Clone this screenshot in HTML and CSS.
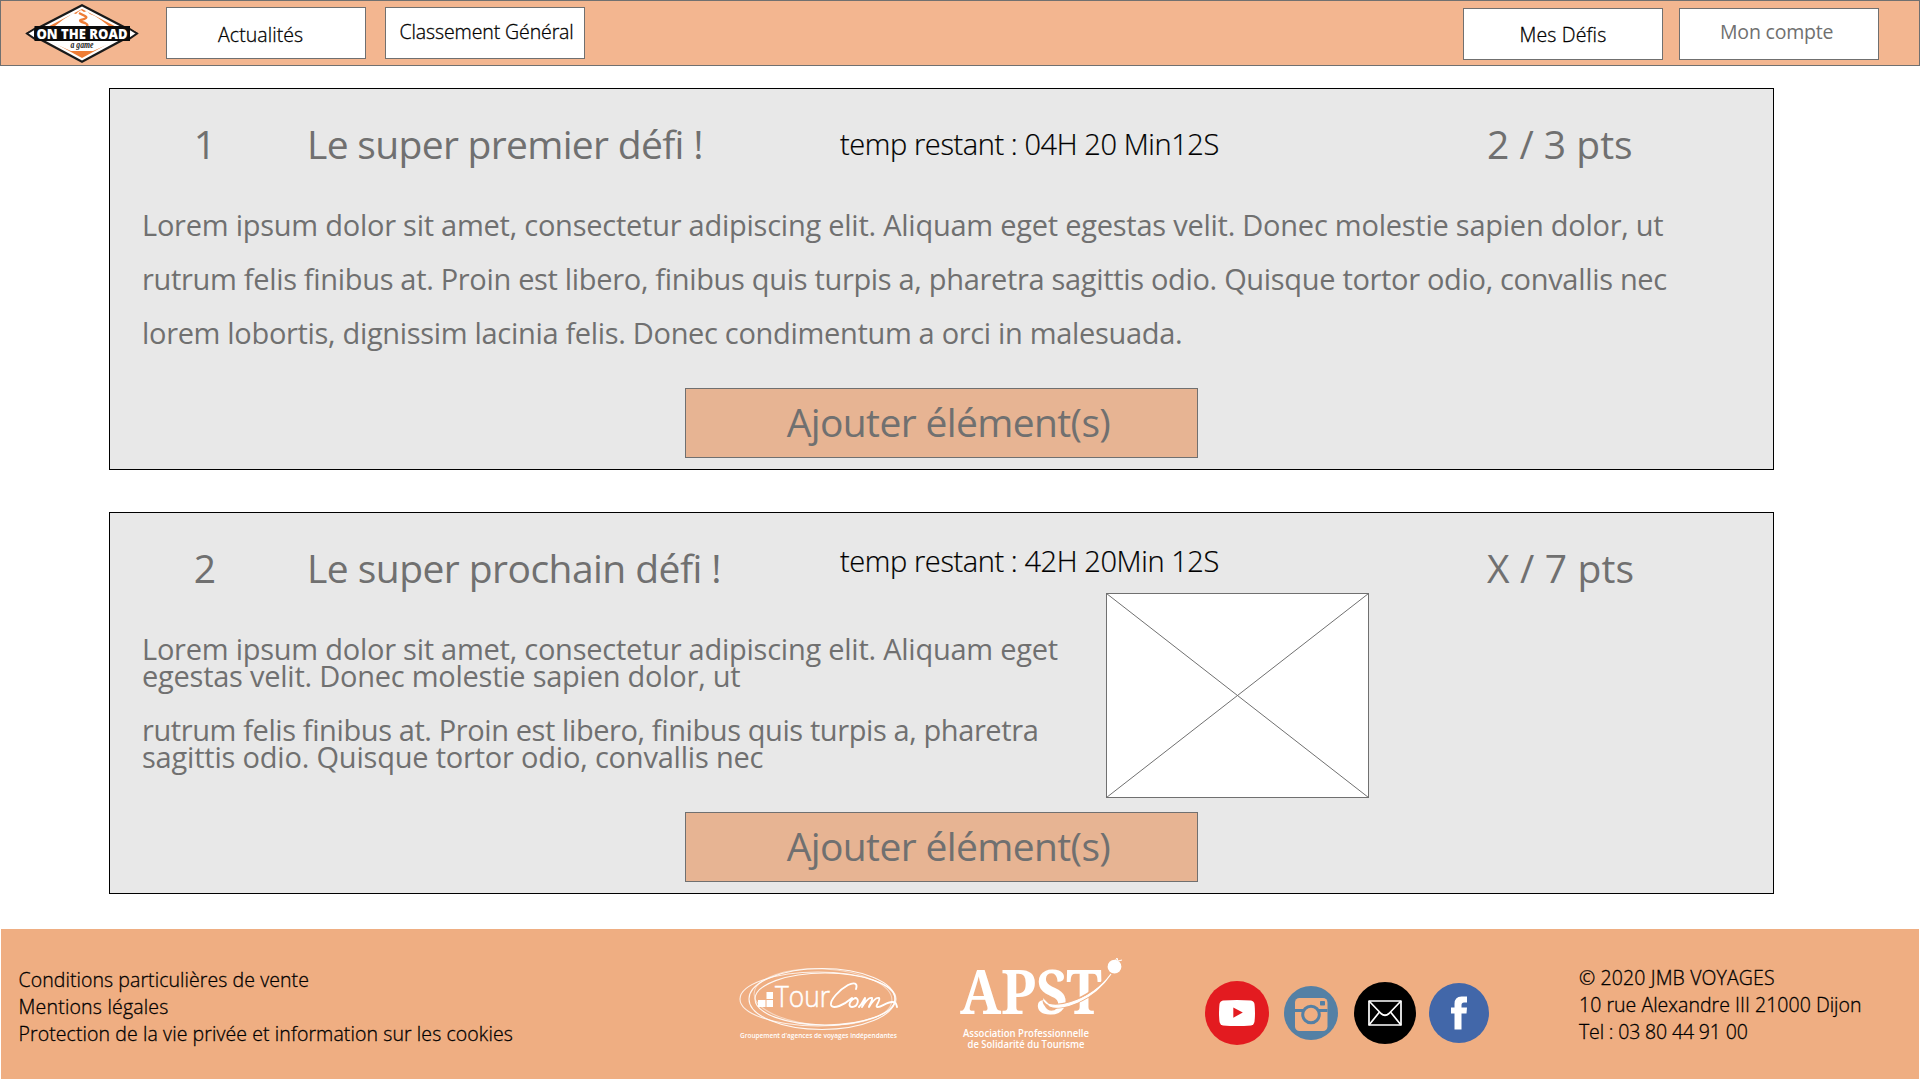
FILE: index.html
```html
<!DOCTYPE html>
<html lang="fr">
<head>
<meta charset="utf-8">
<title>On the road - Mes défis</title>
<link rel="stylesheet" href="styles.css">
</head>
<body>
<header class="topbar">
  <svg class="brand" viewBox="0 0 125 64" role="img" aria-label="On the road, a game">
    <polygon points="62,3 118,32 62,62 6,32" fill="#1a1a1a"/>
    <polygon points="62,5.5 113,32 62,59.5 11,32" fill="#fff"/>
    <polygon points="62,8 108,32 62,57 16,32" fill="#ee7d36"/>
    <polygon points="26,32 44,18 49,15 53,12 56,13 58,11 61,9 64,11 67,10 70,13 75,15 81,19 98,32 98,39 73,50 51,50 26,39" fill="#fff"/>
    <path d="M59 12 L65 15 Q69 17 61 19 Q58 20 65 22 Q71 25 62 28" fill="none" stroke="#ee7d36" stroke-width="2.4"/>
    <polygon points="7,32.5 15,27.5 15,38" fill="#fff" stroke="#1a1a1a" stroke-width="2"/>
    <polygon points="117,32.5 109,27.5 109,38" fill="#fff" stroke="#1a1a1a" stroke-width="2"/>
    <rect x="14.500" y="25" width="95.500" height="15" fill="#0c0c0c"/>
    <text class="brand-name" x="62" y="37.500" text-anchor="middle" textLength="91" lengthAdjust="spacingAndGlyphs">ON THE ROAD</text>
    <text class="brand-sub" x="62" y="47" text-anchor="middle" textLength="23" lengthAdjust="spacingAndGlyphs">a game</text>
  </svg>
  <nav class="nav">
    <a class="tab tab-news">Actualités</a>
    <a class="tab tab-ranking">Classement Général</a>
  </nav>
  <nav class="nav nav-user">
    <a class="tab tab-challenges">Mes Défis</a>
    <a class="tab tab-account">Mon compte</a>
  </nav>
</header>

<main class="challenges">
  <section class="card">
    <div class="card-head">
      <span class="number">1</span>
      <h2 class="title">Le super premier défi !</h2>
      <span class="timer">temp restant : 04H 20 Min12S</span>
      <span class="points">2 / 3 pts</span>
    </div>
    <div class="text text-wide">
      <p>Lorem ipsum dolor sit amet, consectetur adipiscing elit. Aliquam eget egestas velit. Donec molestie sapien dolor, ut</p>
      <p class="tight">rutrum felis finibus at. Proin est libero, finibus quis turpis a, pharetra sagittis odio. Quisque tortor odio, convallis nec</p>
      <p class="tight">lorem lobortis, dignissim lacinia felis. Donec condimentum a orci in malesuada.</p>
    </div>
    <button class="add">Ajouter élément(s)</button>
  </section>

  <section class="card card-media">
    <div class="card-head">
      <span class="number">2</span>
      <h2 class="title title-long">Le super prochain défi !</h2>
      <span class="timer timer-raised">temp restant : 42H 20Min 12S</span>
      <span class="points points-open">X / 7 pts</span>
    </div>
    <div class="card-body">
      <div class="text text-narrow">
        <p>Lorem ipsum dolor sit amet, consectetur adipiscing elit. Aliquam eget<br>egestas velit. Donec molestie sapien dolor, ut</p>
        <p><span class="tight">rutrum felis finibus at. Proin est libero, finibus quis turpis a, pharetra</span><br><span class="loose">sagittis odio. Quisque tortor odio, convallis nec</span></p>
      </div>
      <svg class="placeholder" viewBox="0 0 263 205">
        <rect x=".5" y=".5" width="262" height="204" fill="#fff" stroke="#707070"/>
        <path d="M.5 .5 L262.500 204.500 M262.500 .5 L.5 204.500" stroke="#707070"/>
      </svg>
    </div>
    <button class="add">Ajouter élément(s)</button>
  </section>
</main>

<footer class="footer">
  <div class="legal">
    <a class="legal-terms">Conditions particulières de vente</a>
    <a class="legal-notice">Mentions légales</a>
    <a class="legal-privacy">Protection de la vie privée et information sur les cookies</a>
  </div>
  <svg class="tourcom" viewBox="0 0 170 82" role="img" aria-label="TourCom">
    <g fill="none" stroke="#fff" stroke-width="1.100">
      <ellipse cx="83" cy="39" rx="78" ry="27" opacity=".8"/>
      <ellipse cx="87" cy="39" rx="73" ry="30.500" opacity=".9"/>
      <ellipse cx="90" cy="39" rx="70" ry="26" opacity=".9"/>
      <ellipse cx="88" cy="37" rx="69" ry="28" transform="rotate(3 88 37)" opacity=".5"/>
    </g>
    <path d="M23 40 h7.500 v7 h-7.500z M31.500 40 h6.500 v7 h-6.500z M31.500 32 h6.500 v7 h-6.500z" fill="#fff"/>
    <text class="tc-name" x="40" y="47" textLength="55" lengthAdjust="spacingAndGlyphs">Tour</text>
    <path d="M121 29 C123 23 119 22 113 25 C104 30 95 40 96 45 C98 50 109 45 117 38 M121 38 C115 39 112 47 117 47 C123 47 125 38 120 38 M124 47 C127 44 129 39 130 38 C131 39 128 44 127 47 C130 42 134 37 137 38 C138 40 134 45 134 47 C137 42 141 37 144 38 C146 40 140 46 142 47 C146 48 151 42 157 42 C161 42 161 43 162 47" fill="none" stroke="#fff" stroke-width="1.900" stroke-linecap="round" stroke-linejoin="round"/>
    <text class="tc-caption" x="5" y="78" textLength="157" lengthAdjust="spacingAndGlyphs">Groupement d'agences de voyages indépendantes</text>
  </svg>
  <svg class="apst" viewBox="0 0 170 94" role="img" aria-label="APST">
    <text class="apst-name" x="5" y="59" textLength="142" lengthAdjust="spacingAndGlyphs">APST</text>
    <path d="M90 46 C91 58 135 50 157 17" fill="none" stroke="#efae82" stroke-width="5"/>
    <path d="M89 45 C92 57 134 49 156 19 C138 46 106 56 95 51 Z" fill="#fff" stroke="#fff" stroke-width="1.200"/>
    <circle cx="159.500" cy="11.700" r="6.900" fill="#fff"/>
    <path d="M160 6 L162 3 L163 6 L167 5" fill="none" stroke="#fff"/>
    <text class="apst-caption" x="8" y="81.500" textLength="126" lengthAdjust="spacingAndGlyphs">Association Professionnelle</text>
    <text class="apst-caption" x="12.500" y="93" textLength="117" lengthAdjust="spacingAndGlyphs">de Solidarité du Tourisme</text>
  </svg>
  <div class="social">
    <svg class="youtube" viewBox="0 0 64 64"><circle cx="32" cy="32" r="32" fill="#e31b20"/><path d="M18 19.500 Q32 18.500 46 19.500 Q49 20 49.500 23 Q50.500 32 49.500 40.500 Q49 44 46 44.500 Q32 45.500 18 44.500 Q15 44 14.500 40.500 Q13.500 32 14.500 23 Q15 20 18 19.500Z" fill="#fff"/><path d="M28.300 26.500 V36.800 L37.800 31.500Z" fill="#e31b20"/></svg>
    <svg class="instagram" viewBox="0 0 54 54"><circle cx="27" cy="27" r="27" fill="#5480a5"/><rect x="11" y="12" width="32.500" height="33" rx="4.500" fill="#efae82"/><path d="M11 24.500 H43.500" stroke="#5480a5" stroke-width="3"/><circle cx="27" cy="28.500" r="8.300" fill="#efae82" stroke="#5480a5" stroke-width="3"/><rect x="36" y="15" width="5" height="4.500" rx=".8" fill="#5480a5"/></svg>
    <svg class="mail" viewBox="0 0 62 62"><circle cx="31" cy="31" r="31" fill="#000"/><g fill="none" stroke="#fff" stroke-width="1.700" stroke-linejoin="round"><rect x="15" y="19" width="32" height="24"/><path d="M15 19 L27 31.500 Q31 35 35 31.500 L47 19 M15 43 L25.500 30 M47 43 L36.500 30"/></g></svg>
    <svg class="facebook" viewBox="0 0 60 60"><circle cx="30" cy="30" r="30" fill="#4267a9"/><path d="M25.500 46.500 V30.500 H22 V24.500 H25.500 V21 Q25.500 13.500 32.500 13.500 H38 V19.500 H35 Q32.500 19.500 32.500 22 V24.500 H38 L37.500 30.500 H32.500 V46.500Z" fill="#fff"/></svg>
  </div>
  <address class="contact">
    <span>© 2020 JMB VOYAGES</span>
    <span class="street">10 rue Alexandre III 21000 Dijon</span>
    <span class="phone">Tel : 03 80 44 91 00</span>
  </address>
</footer>
</body>
</html>
```
FILE: styles.css
```css
* { box-sizing: border-box; }

body {
  margin: 0;
  height: 1080px;
  overflow: hidden;
  background: #fff;
  color: #000;
  font-family: "Open Sans", "Noto Sans", sans-serif;
}

svg { display: block; flex: none; }

/* Top bar */
.topbar {
  display: flex;
  align-items: flex-start;
  height: 66px;
  padding-left: 19px;
  border: 1px solid #707070;
  background: #f3b690;
}
.brand { width: 125px; height: 64px; }
.brand-name { font: 800 14px "Open Sans", sans-serif; fill: #fff; }
.brand-sub { font: italic bold 10px "Liberation Serif", serif; fill: #222; }
.nav { display: flex; gap: 19px; margin: 6px 0 0 21px; }
.nav-user { gap: 16px; margin: 7px 40px 0 auto; }
.tab {
  width: 200px;
  height: 52px;
  border: 1px solid #707070;
  background: #fff;
  font-size: 19.5px;
  font-weight: 300;
  -webkit-text-stroke: .3px;
  line-height: 27px;
  white-space: nowrap;
}
.tab-news { padding: 13px 0 0 51px; letter-spacing: .08px; }
.tab-ranking { padding: 10px 0 0 13.5px; letter-spacing: -.11px; }
.tab-challenges { padding: 12px 0 0 55.5px; letter-spacing: .15px; }
.tab-account {
  padding: 9px 0 0 40px;
  letter-spacing: -.19px;
  color: #707070;
  font-weight: 400;
  -webkit-text-stroke: 0;
}

/* Challenge cards */
.challenges {
  display: flex;
  flex-direction: column;
  gap: 42px;
  padding: 22px 0 0 109px;
}
.card {
  display: flex;
  flex-direction: column;
  width: 1665px;
  height: 382px;
  border: 1px solid #000;
  background: #e8e8e8;
  color: #707070;
}
.card-head {
  display: grid;
  grid-template-columns: 197px 533px 647px auto;
  align-items: start;
  height: 85px;
  padding-top: 25px;
  font-size: 39px;
  line-height: 60px;
  white-space: nowrap;
}
.number { width: 190px; text-align: center; }
.title { margin: 0; font-size: inherit; font-weight: 400; letter-spacing: -.68px; }
.title-long { letter-spacing: -.55px; }
.timer { color: #000; font-size: 29px; font-weight: 300; letter-spacing: -.41px; -webkit-text-stroke: .2px; }
.timer-raised { margin-top: -7px; }
.points-open { letter-spacing: .15px; }

.text { padding-left: 32px; font-size: 29px; letter-spacing: -.245px; white-space: nowrap; }
.text p { margin: 0; }
.text-wide { margin-top: 24px; line-height: 54px; }
.text-wide .tight { letter-spacing: -.32px; }
.text-narrow { padding-top: 42px; line-height: 27px; }
.text-narrow p + p { margin-top: 27px; }
.text-narrow .tight { letter-spacing: -.4px; }
.text-narrow .loose { letter-spacing: -.2px; }

.card-body { display: flex; height: 205px; margin-top: -5px; }
.text-narrow { width: 996px; }
.placeholder { width: 263px; height: 205px; }

.add {
  flex: none;
  align-self: center;
  width: 513px;
  height: 70px;
  margin: 28px 0 0 0;
  padding: 0 0 3px 14px;
  border: 1px solid #707070;
  background: #e7b493;
  color: #707070;
  font: 39px/65px "Open Sans", "Noto Sans", sans-serif;
  letter-spacing: -.63px;
}
.card-media .add { margin-top: 14px; }

/* Footer */
.footer {
  display: flex;
  align-items: flex-start;
  height: 150px;
  margin: 35px 1px 0;
  background: #efae82;
  font-size: 19.5px;
  font-weight: 300;
  line-height: 27px;
  white-space: nowrap;
}
.legal,
.contact { display: flex; flex-direction: column; -webkit-text-stroke: .3px; }
.legal { width: 734px; padding: 37px 0 0 17.5px; }
.legal-terms { letter-spacing: .07px; }
.legal-notice { letter-spacing: .2px; }
.legal-privacy { letter-spacing: .09px; }
.tourcom { width: 170px; height: 82px; margin-top: 31px; }
.apst { width: 170px; height: 94px; margin: 26px 0 0 50px; overflow: visible; }
.tc-name { font: 300 29px "Open Sans", sans-serif; fill: #fff; stroke: #fff; stroke-width: .5; }
.tc-caption { font: 600 7px "Open Sans", sans-serif; fill: #fff; }
.apst-name { font: bold 61px "Noto Serif", "Liberation Serif", serif; fill: #fff; }
.apst-caption { font: 600 10.5px "Open Sans", sans-serif; fill: #fff; }
.social { display: flex; align-items: center; height: 64px; margin: 52px 0 0 80px; }
.youtube { width: 64px; height: 64px; }
.instagram { width: 54px; height: 54px; margin-left: 15px; }
.mail { width: 62px; height: 62px; margin-left: 16px; }
.facebook { width: 60px; height: 60px; margin-left: 13px; }
.contact { margin-left: 90px; padding-top: 35px; font-style: normal; letter-spacing: .12px; }
.contact .street { letter-spacing: .03px; }
.contact .phone { letter-spacing: -.15px; }
```
